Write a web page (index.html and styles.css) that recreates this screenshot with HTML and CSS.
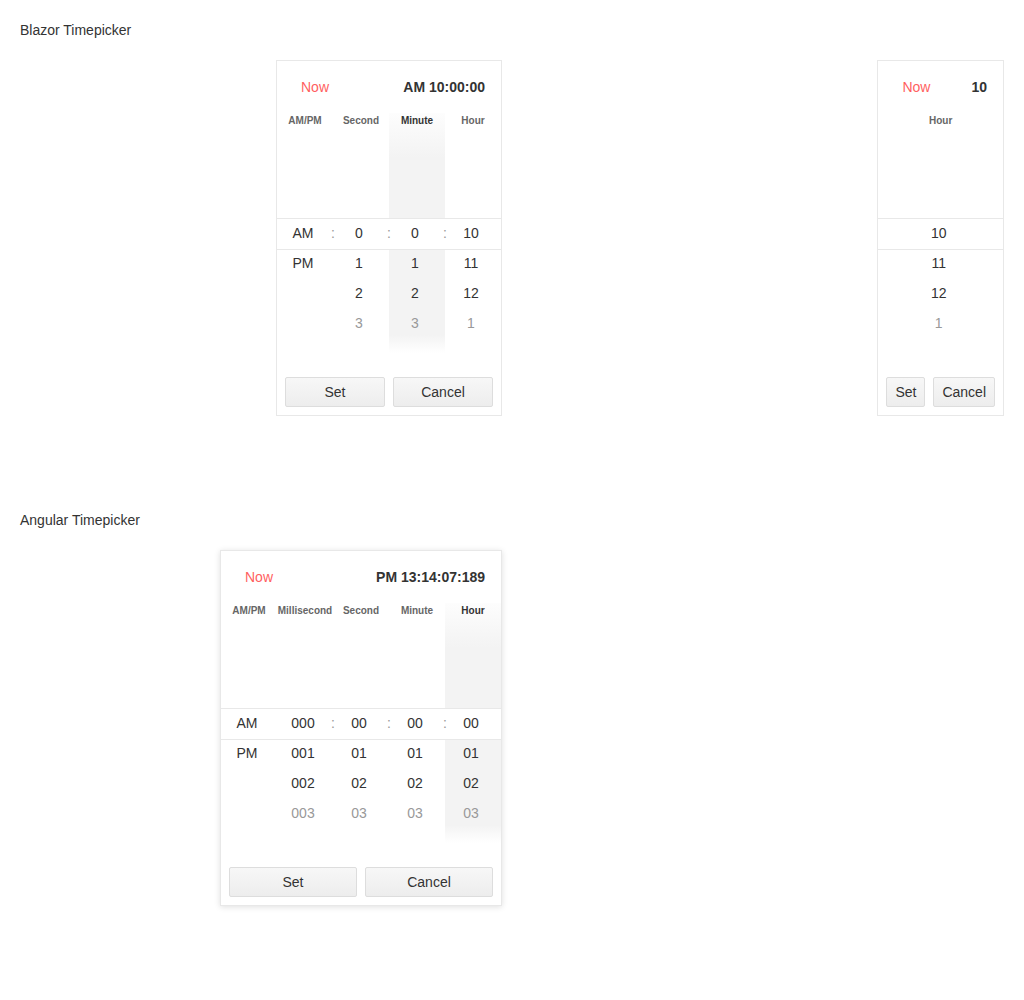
FILE: index.html
```html
<!DOCTYPE html>
<html>
<head>
<meta charset="utf-8">
<link rel="stylesheet" href="styles.css">
</head>
<body>
<section class="section">
  <h2 class="title">Blazor Timepicker</h2>
  <div class="grid">
    <div class="picker">
      <div class="head"><button class="now">Now</button><span class="value">AM 10:00:00</span></div>
      <div class="cols">
        <div class="col">
          <div class="label">AM/PM</div>
          <div class="item sel">AM</div><div class="item">PM</div>
        </div>
        <div class="col">
          <div class="label">Second</div>
          <div class="item sel sep">0</div><div class="item">1</div><div class="item">2</div><div class="item far">3</div>
        </div>
        <div class="col hl">
          <div class="label">Minute</div>
          <div class="item sel sep">0</div><div class="item">1</div><div class="item">2</div><div class="item far">3</div>
        </div>
        <div class="col">
          <div class="label">Hour</div>
          <div class="item sel sep">10</div><div class="item">11</div><div class="item">12</div><div class="item far">1</div>
        </div>
      </div>
      <div class="foot"><button class="btn">Set</button><button class="btn">Cancel</button></div>
    </div>
    <div class="picker">
      <div class="head"><button class="now">Now</button><span class="value">10</span></div>
      <div class="cols">
        <div class="col">
          <div class="label">Hour</div>
          <div class="item sel">10</div><div class="item">11</div><div class="item">12</div><div class="item far">1</div>
        </div>
      </div>
      <div class="foot"><button class="btn">Set</button><button class="btn">Cancel</button></div>
    </div>
  </div>
</section>
<section class="section">
  <h2 class="title">Angular Timepicker</h2>
  <div class="grid">
    <div class="picker shadow">
      <div class="head"><button class="now">Now</button><span class="value">PM 13:14:07:189</span></div>
      <div class="cols">
        <div class="col">
          <div class="label">AM/PM</div>
          <div class="item sel">AM</div><div class="item">PM</div>
        </div>
        <div class="col">
          <div class="label">Millisecond</div>
          <div class="item sel">000</div><div class="item">001</div><div class="item">002</div><div class="item far">003</div>
        </div>
        <div class="col">
          <div class="label">Second</div>
          <div class="item sel sep">00</div><div class="item">01</div><div class="item">02</div><div class="item far">03</div>
        </div>
        <div class="col">
          <div class="label">Minute</div>
          <div class="item sel sep">00</div><div class="item">01</div><div class="item">02</div><div class="item far">03</div>
        </div>
        <div class="col hl">
          <div class="label">Hour</div>
          <div class="item sel sep">00</div><div class="item">01</div><div class="item">02</div><div class="item far">03</div>
        </div>
      </div>
      <div class="foot"><button class="btn">Set</button><button class="btn">Cancel</button></div>
    </div>
  </div>
</section>
</body>
</html>
```
FILE: styles.css
```css
* { box-sizing: border-box; }
body {
  margin: 0;
  padding: 20px;
  font-family: "Liberation Sans", Arial, sans-serif;
  font-size: 14px;
  color: #333;
  background: #fff;
}
.section { margin-bottom: 94px; }
.title {
  margin: 0 0 20px;
  font-size: 14px;
  font-weight: normal;
  line-height: 20px;
  color: #333;
}
.grid {
  display: grid;
  grid-template-columns: 1fr 1fr;
  column-gap: 20px;
  justify-items: end;
  align-items: start;
}
.picker {
  display: flex;
  flex-direction: column;
  border: 1px solid #e8e8e8;
  background: #fff;
}
.picker.shadow { box-shadow: 0 1px 6px rgba(0,0,0,0.13); }
.head {
  height: 52px;
  display: flex;
  align-items: center;
  justify-content: space-between;
  padding: 0 16px;
  gap: 24px;
}
.now {
  border: 0;
  background: none;
  padding: 0 8px;
  font: inherit;
  color: #ff5f5f;
  cursor: pointer;
}
.value { font-weight: bold; color: #333; }
.cols {
  position: relative;
  display: flex;
  justify-content: center;
  height: 240px;
}
.cols::before {
  content: "";
  position: absolute;
  left: 0;
  right: 0;
  top: 105px;
  height: 30px;
  border-top: 1px solid #e8e8e8;
  border-bottom: 1px solid #e8e8e8;
  background: #fff;
  z-index: 1;
}
.col {
  position: relative;
  width: 56px;
  height: 240px;
  padding-top: 105px;
  text-align: center;
}
.col.hl {
  background: linear-gradient(to bottom, #fdfdfd 0, #f3f3f3 45px, #f3f3f3 222px, #fff 240px);
}
.label {
  position: absolute;
  top: 0;
  left: 0;
  right: 0;
  height: 15px;
  line-height: 15px;
  font-size: 10px;
  font-weight: bold;
  color: #666;
  white-space: nowrap;
  z-index: 2;
}
.col.hl .label { color: #333; }
.item {
  position: relative;
  z-index: 2;
  height: 30px;
  line-height: 30px;
  padding-right: 4px;
  font-size: 14px;
  color: #333;
}
.item.sep::before {
  content: ":";
  position: absolute;
  left: 0;
  top: 0;
  transform: translateX(-50%);
  color: #999;
}
.item.far { color: #999; }
.foot {
  display: flex;
  gap: 8px;
  padding: 24px 8px 8px;
}
.btn {
  flex: 1 1 0;
  height: 30px;
  padding: 0 8px;
  border: 1px solid #ddd;
  border-radius: 2px;
  background: linear-gradient(to bottom, #f7f7f7, #ededed);
  font: inherit;
  color: #333;
  white-space: nowrap;
}
```
